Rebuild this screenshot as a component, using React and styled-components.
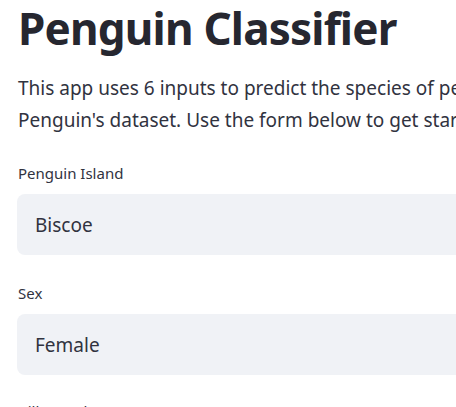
import styled, { createGlobalStyle } from 'styled-components';

const GlobalStyle = createGlobalStyle`
  html, body {
    margin: 0;
    padding: 0;
    background: #ffffff;
    overflow: hidden;
  }
  body {
    font-family: 'Noto Sans', 'Open Sans', sans-serif;
    color: #31333f;
  }
`;

const Page = styled.main`
  width: 940px;
  padding: 0 0 0 18px;
  display: flex;
  flex-direction: column;
`;

const Title = styled.h1`
  margin: 0;
  padding-top: 2px;
  font-size: 44px;
  line-height: 52px;
  font-weight: 700;
  color: #262730;
  letter-spacing: -0.8px;
`;

const Intro = styled.p`
  margin: 18px 0 0;
  font-size: 19px;
  line-height: 32px;
  color: #31333f;
`;

const Field = styled.div`
  display: flex;
  flex-direction: column;
  margin-top: ${({ $gap }) => $gap}px;
`;

const Label = styled.label`
  font-size: 15px;
  line-height: 22px;
  color: #31333f;
  margin-bottom: 10px;
`;

const Select = styled.div`
  margin-left: -1px;
  height: 61px;
  border-radius: 8px;
  background: #f0f2f6;
  display: flex;
  align-items: center;
  padding-left: 18px;
  font-size: 19px;
  color: #31333f;
`;

const fields = [
  { label: 'Penguin Island', value: 'Biscoe', gap: 26 },
  { label: 'Sex', value: 'Female', gap: 27 },
];

export default function App() {
  return (
    <>
      <GlobalStyle />
      <Page>
        <Title>Penguin Classifier</Title>
        <Intro>
          This app uses 6 inputs to predict the species of penguin using a model built on the Palmer
          <br />
          Penguin's dataset. Use the form below to get started!
        </Intro>
        {fields.map((f) => (
          <Field key={f.label} $gap={f.gap}>
            <Label>{f.label}</Label>
            <Select>{f.value}</Select>
          </Field>
        ))}
        <Field $gap={25}>
          <Label>Bill Length (mm)</Label>
        </Field>
      </Page>
    </>
  );
}
